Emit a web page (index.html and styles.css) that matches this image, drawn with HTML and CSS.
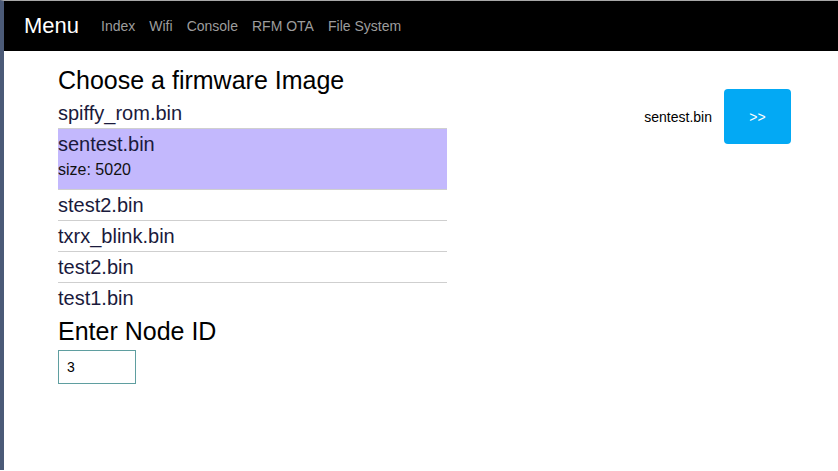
FILE: index.html
```html
<!DOCTYPE html>
<html lang="en">
<head>
    <meta charset="UTF-8">
    <meta name="viewport" content="width=device-width, initial-scale=1.0">
    <title>RFM OTA</title>
    <link rel="stylesheet" href="styles.css">
</head>
<body>
    <nav class="navbar">
        <a class="brand" href="#">Menu</a>
        <ul class="nav">
            <li><a href="#">Index</a></li>
            <li><a href="#">Wifi</a></li>
            <li><a href="#">Console</a></li>
            <li><a href="#">RFM OTA</a></li>
            <li><a href="#">File System</a></li>
        </ul>
    </nav>

    <div class="content">
        <div class="left">
            <h2>Choose a firmware Image</h2>
            <ul class="files">
                <li>spiffy_rom.bin</li>
                <li class="selected">sentest.bin
                    <div class="size">size: 5020</div>
                </li>
                <li>stest2.bin</li>
                <li>txrx_blink.bin</li>
                <li>test2.bin</li>
                <li>test1.bin</li>
            </ul>
            <h2>Enter Node ID</h2>
            <input class="node" type="text" value="3" autofocus>
        </div>
        <div class="right">
            <span class="picked">sentest.bin</span>
            <button class="send">&gt;&gt;</button>
        </div>
    </div>
</body>
</html>
```

FILE: styles.css
```css
body {
    font-family: "Liberation Sans", Arial, sans-serif;
    margin: 0;
    border-top: 1px solid #a8a8a8;
    border-left: 4px solid #4b5a77;
    min-height: 470px;
    box-sizing: border-box;
    background-color: #fff;
}

.navbar {
    display: flex;
    align-items: center;
    height: 50px;
    background-color: #000;
    padding-left: 20px;
}

.brand {
    font-size: 22px;
    color: #fff;
    text-decoration: none;
    margin-right: 15px;
}

.nav {
    display: flex;
    list-style: none;
    margin: 0;
    padding: 0;
}

.nav a {
    display: block;
    padding: 0 7px;
    font-size: 14px;
    color: #9d9d9d;
    text-decoration: none;
}

.content {
    display: flex;
    justify-content: space-between;
    padding: 11px 47px 0 54px;
}

.left {
    width: 389px;
}

h2 {
    font-size: 25px;
    font-weight: normal;
    line-height: 30px;
    margin: 3px 0;
    color: #000;
}

.files {
    list-style: none;
    margin: 0;
    padding: 0;
}

.files li {
    font-size: 20px;
    line-height: 30px;
    color: #1a1a3c;
}

.files li + li {
    border-top: 1px solid #cfcfcf;
}

.files li.selected {
    background-color: #c3b8fd;
    padding-bottom: 8px;
}

.size {
    font-size: 16px;
    line-height: 22px;
    color: #111;
}

.node {
    margin-top: 1px;
    width: 78px;
    height: 34px;
    box-sizing: border-box;
    border: 1px solid #5f9ea0;
    padding: 0 8px;
    font-family: "Liberation Sans", Arial, sans-serif;
    font-size: 14px;
    color: #000;
    outline: none;
}

.right {
    display: flex;
    align-items: center;
    gap: 12px;
    margin-top: 27px;
    align-self: flex-start;
}

.picked {
    font-size: 14px;
    color: #000;
}

.send {
    width: 67px;
    height: 55px;
    border: none;
    border-radius: 4px;
    background-color: #03a9f4;
    color: #fff;
    font-family: "Liberation Sans", Arial, sans-serif;
    font-size: 14px;
}
```
